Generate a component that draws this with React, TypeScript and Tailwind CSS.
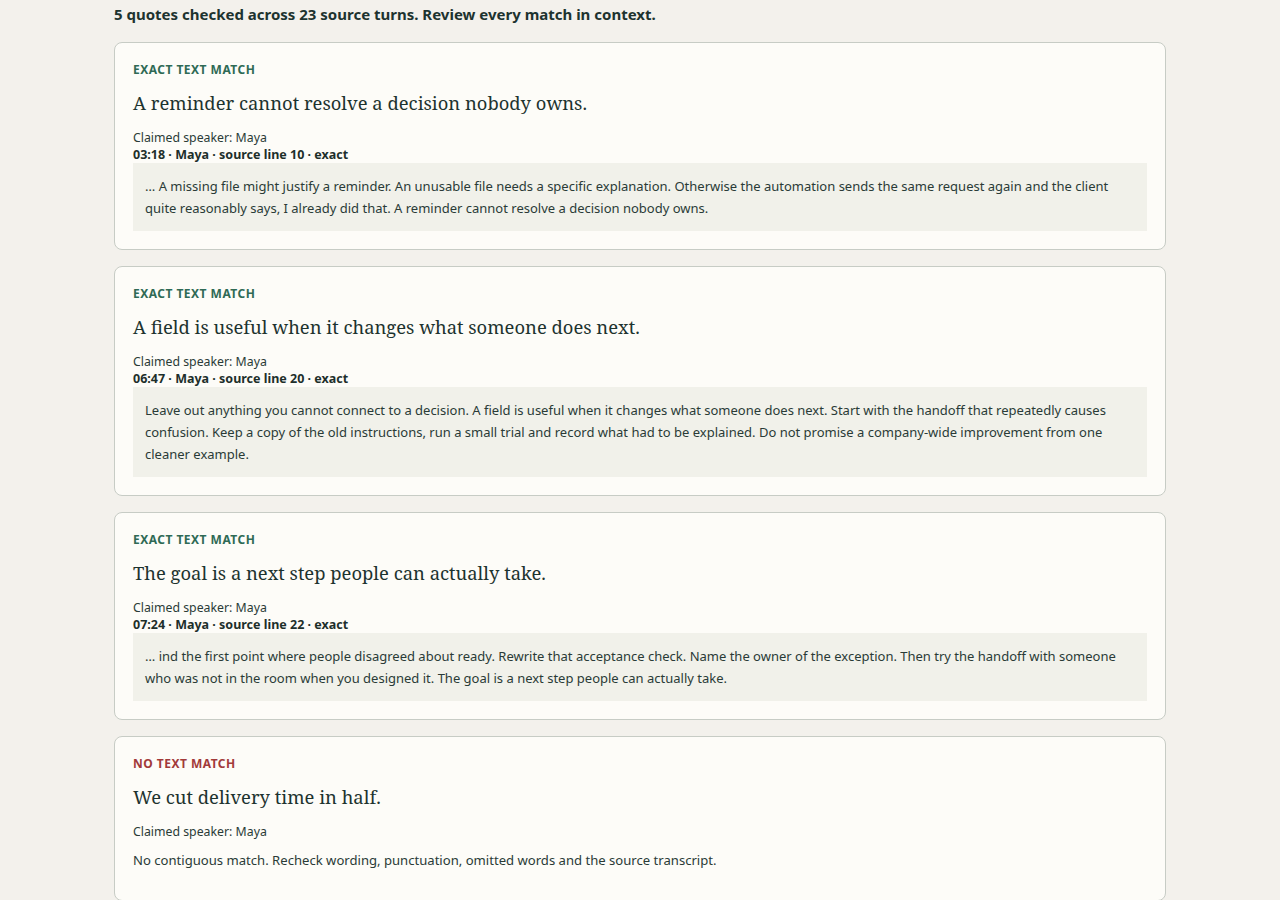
import React from "react";

type Quote = {
  matched: boolean;
  quote: string;
  speaker: string;
  meta?: string;
  excerpt?: string;
  note?: string;
};

const quotes: Quote[] = [
  {
    matched: true,
    quote: "A reminder cannot resolve a decision nobody owns.",
    speaker: "Maya",
    meta: "03:18 · Maya · source line 10 · exact",
    excerpt:
      "… A missing file might justify a reminder. An unusable file needs a specific explanation. Otherwise the automation sends the same request again and the client quite reasonably says, I already did that. A reminder cannot resolve a decision nobody owns.",
  },
  {
    matched: true,
    quote: "A field is useful when it changes what someone does next.",
    speaker: "Maya",
    meta: "06:47 · Maya · source line 20 · exact",
    excerpt:
      "Leave out anything you cannot connect to a decision. A field is useful when it changes what someone does next. Start with the handoff that repeatedly causes confusion. Keep a copy of the old instructions, run a small trial and record what had to be explained. Do not promise a company-wide improvement from one cleaner example.",
  },
  {
    matched: true,
    quote: "The goal is a next step people can actually take.",
    speaker: "Maya",
    meta: "07:24 · Maya · source line 22 · exact",
    excerpt:
      "… ind the first point where people disagreed about ready. Rewrite that acceptance check. Name the owner of the exception. Then try the handoff with someone who was not in the room when you designed it. The goal is a next step people can actually take.",
  },
  {
    matched: false,
    quote: "We cut delivery time in half.",
    speaker: "Maya",
    note: "No contiguous match. Recheck wording, punctuation, omitted words and the source transcript.",
  },
];

function QuoteCard({ q }: { q: Quote }) {
  return (
    <article className="rounded-[8px] border border-[#c7ccc5] bg-[#fdfcf8] px-[18px] pt-[19px] pb-[18px]">
      <div
        className={
          q.matched
            ? "text-[12px] leading-[16px] font-bold uppercase tracking-[0.04em] text-[#2f6a55]"
            : "text-[12px] leading-[16px] font-bold uppercase tracking-[0.04em] text-[#a23a3a]"
        }
      >
        {q.matched ? "Exact text match" : "No text match"}
      </div>
      <h2 className="mt-[11px] font-['Noto_Serif',serif] text-[18.4px] leading-[28px] font-normal text-[#1d332f]">
        {q.quote}
      </h2>
      <div className="mt-[12px] text-[12.3px] leading-[17px] text-[#2a3b37]">
        Claimed speaker: {q.speaker}
      </div>
      {q.meta && (
        <div className="text-[12.5px] leading-[17px] font-bold text-[#1d2f2b]">{q.meta}</div>
      )}
      {q.excerpt && (
        <p className="bg-[#f1f1ea] px-[12px] py-[12px] text-[13px] leading-[22px] text-[#2a3b37]">
          {q.excerpt}
        </p>
      )}
      {q.note && (
        <p className="mt-[10px] pb-[12px] text-[13.1px] leading-[20px] text-[#2a3b37]">{q.note}</p>
      )}
    </article>
  );
}

export default function App() {
  return (
    <div className="min-h-screen bg-[#f3f1ec] font-['Noto_Sans',sans-serif] text-[#1d332f]">
      <main className="mx-auto w-[1052px] pt-[4px] pb-10">
        <p className="text-[15px] leading-[20px] font-bold text-[#1d332f]">
          5 quotes checked across 23 source turns. Review every match in context.
        </p>
        <div className="mt-[18px] flex flex-col gap-[16px]">
          {quotes.map((q, i) => (
            <QuoteCard key={i} q={q} />
          ))}
        </div>
      </main>
    </div>
  );
}
